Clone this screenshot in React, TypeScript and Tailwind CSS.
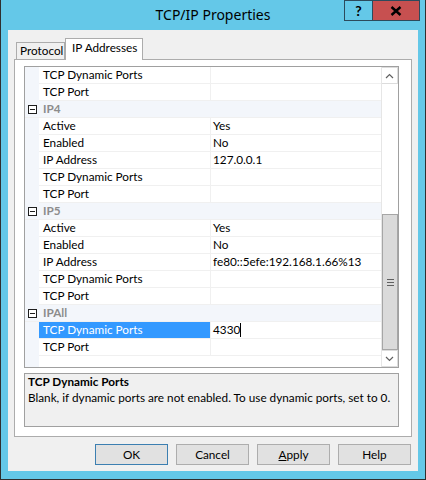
import React from "react";

type Row =
  | { kind: "cat"; label: string }
  | { kind: "prop"; name: string; value?: string; selected?: boolean };

const rows: Row[] = [
  { kind: "prop", name: "TCP Dynamic Ports" },
  { kind: "prop", name: "TCP Port" },
  { kind: "cat", label: "IP4" },
  { kind: "prop", name: "Active", value: "Yes" },
  { kind: "prop", name: "Enabled", value: "No" },
  { kind: "prop", name: "IP Address", value: "127.0.0.1" },
  { kind: "prop", name: "TCP Dynamic Ports" },
  { kind: "prop", name: "TCP Port" },
  { kind: "cat", label: "IP5" },
  { kind: "prop", name: "Active", value: "Yes" },
  { kind: "prop", name: "Enabled", value: "No" },
  { kind: "prop", name: "IP Address", value: "fe80::5efe:192.168.1.66%13" },
  { kind: "prop", name: "TCP Dynamic Ports" },
  { kind: "prop", name: "TCP Port" },
  { kind: "cat", label: "IPAll" },
  { kind: "prop", name: "TCP Dynamic Ports", value: "4330", selected: true },
  { kind: "prop", name: "TCP Port" },
];

const font = "font-['Lato','Liberation_Sans',sans-serif]";

const CollapseBox = () => (
  <div className="w-[9px] h-[9px] border border-[#1e1e1e] bg-white flex items-center justify-center">
    <div className="w-[5px] h-px bg-[#1e1e1e]" />
  </div>
);

const GridRow: React.FC<{ row: Row }> = ({ row }) => {
  if (row.kind === "cat") {
    return (
      <div className="flex h-[17px] bg-[#f3f6fb] border-b border-[#f0f0f0]">
        <div className="w-[14px] flex items-center justify-end pr-[2px]">
          <CollapseBox />
        </div>
        <div className="pl-[4px] leading-[16px] font-bold text-[#8c8c8c]">{row.label}</div>
      </div>
    );
  }
  return (
    <div className="flex h-[17px]">
      <div className="w-[14px] bg-[#f3f6fb]" />
      <div
        className={
          row.selected
            ? "w-[172px] pl-[4px] leading-[16px] bg-[#3399ff] text-white border-b border-r border-[#f0f0f0]"
            : "w-[172px] pl-[4px] leading-[16px] text-black border-b border-r border-[#f0f0f0]"
        }
      >
        {row.name}
      </div>
      <div className="flex-1 pl-[2px] leading-[16px] text-black border-b border-[#f0f0f0] flex items-start">
        <span>{row.value ?? ""}</span>
        {row.selected && <span className="w-px h-[14px] mt-[1px] bg-black" />}
      </div>
    </div>
  );
};

const ScrollBar = () => (
  <div className="w-[17px] flex flex-col bg-white border-l border-[#e6e6e6]">
    <div className="h-[17px] flex items-center justify-center border border-[#dcdcdc] border-l-0">
      <svg width="9" height="6" viewBox="0 0 9 6">
        <path d="M1 5 L4.5 1.5 L8 5" stroke="#606060" strokeWidth="1.2" fill="none" />
      </svg>
    </div>
    <div className="flex-1" />
    <div className="h-[136px] bg-[#dadada] border border-[#a6a6a6] flex flex-col items-center justify-center gap-[2px]">
      <div className="w-[7px] h-px bg-[#606060]" />
      <div className="w-[7px] h-px bg-[#606060]" />
      <div className="w-[7px] h-px bg-[#606060]" />
    </div>
    <div className="h-[17px] flex items-center justify-center border border-[#dcdcdc] border-l-0">
      <svg width="9" height="6" viewBox="0 0 9 6">
        <path d="M1 1 L4.5 4.5 L8 1" stroke="#606060" strokeWidth="1.2" fill="none" />
      </svg>
    </div>
  </div>
);

const DialogButton: React.FC<{ label: React.ReactNode; primary?: boolean }> = ({ label, primary }) => (
  <button
    className={
      primary
        ? "w-[73px] h-[21px] bg-[#e1e1e1] border border-[#3c7fb1] text-black text-[11.75px] leading-[19px]"
        : "w-[73px] h-[21px] bg-[#e1e1e1] border border-[#adadad] text-black text-[11.75px] leading-[19px]"
    }
  >
    {label}
  </button>
);

const App: React.FC = () => {
  return (
    <div className={`w-[426px] h-[480px] bg-[#64c8e8] border-x border-b border-[#2f2f2f] flex flex-col ${font} text-[11.75px]`}>
      {/* title bar */}
      <div className="relative h-[30px] flex items-center justify-center">
        <span className="text-[14px] text-black leading-none -mt-[1px] font-['Noto_Sans','Liberation_Sans',sans-serif]">
          TCP/IP Properties
        </span>
        <div className="absolute top-0 right-[5px] flex">
          <div className="w-[29px] h-[21px] border border-[#2c4a5c] flex items-center justify-center font-bold text-[14px] text-black">
            ?
          </div>
          <div className="w-[47px] h-[21px] bg-[#c75050] border border-[#2c4a5c] border-l-0 flex items-center justify-center">
            <svg width="12" height="10" viewBox="0 0 12 10">
              <path d="M1.5 1 L10.5 9 M10.5 1 L1.5 9" stroke="#000" strokeWidth="2.4" />
            </svg>
          </div>
        </div>
      </div>

      {/* client area */}
      <div className="mx-[7px] h-[441px] bg-[#f0f0f0] flex flex-col">
        <div className="pl-[6px] pt-[8px]">
          {/* tabs */}
          <div className="flex items-end h-[21px] pl-[2px]">
            <div className="h-[17px] w-[49px] border border-b-0 border-[#acacac] bg-[#f0f0f0] pl-[3px] leading-[16px] text-black overflow-hidden whitespace-nowrap">
              Protocol
            </div>
            <div className="relative z-10 -mb-px h-[22px] w-[78px] border border-b-0 border-[#acacac] bg-white pl-[6px] leading-[18px] text-black">
              IP Addresses
            </div>
          </div>

          {/* tab page */}
          <div className="w-[398px] h-[378px] border border-[#acacac] bg-white pt-[6px] pl-[9px]">
            <div className="w-[375px] h-[302px] border border-[#a0a0a0] flex">
              <div className="flex-1 flex flex-col">
                {rows.map((r, i) => (
                  <GridRow key={i} row={r} />
                ))}
                <div className="flex-1 flex">
                  <div className="w-[14px] bg-[#f3f6fb]" />
                </div>
              </div>
              <ScrollBar />
            </div>

            {/* description */}
            <div className="mt-[5px] w-[375px] h-[54px] border border-[#a0a0a0] bg-[#f0f0f0] pl-[3px] text-black">
              <div className="font-bold leading-[16px]">TCP Dynamic Ports</div>
              <div className="leading-[16px]">
                Blank, if dynamic ports are not enabled. To use dynamic ports, set to 0.
              </div>
            </div>
          </div>
        </div>

        {/* buttons */}
        <div className="mt-[7px] pr-[7px] flex justify-end gap-[8px]">
          <DialogButton label="OK" primary />
          <DialogButton label="Cancel" />
          <DialogButton
            label={
              <>
                <span className="underline">A</span>pply
              </>
            }
          />
          <DialogButton label="Help" />
        </div>
      </div>
    </div>
  );
};

export default App;
